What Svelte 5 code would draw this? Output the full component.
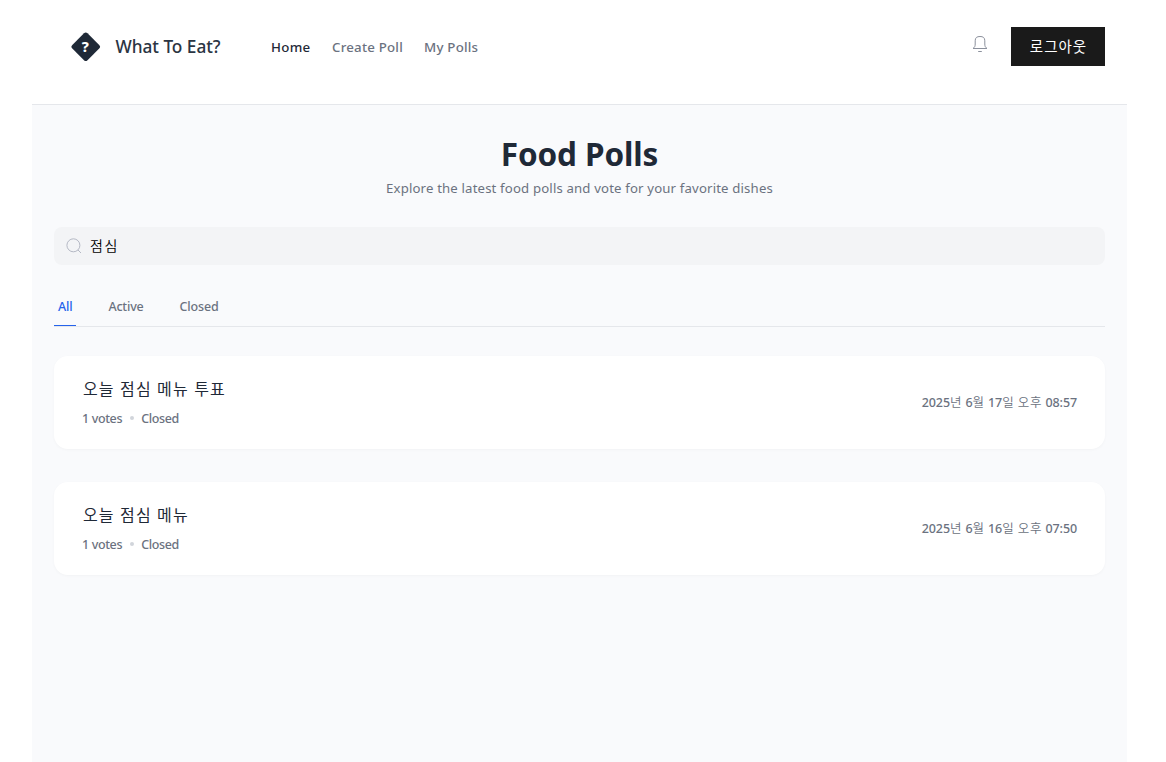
<script lang="ts">
  const links = [
    { label: 'Home', width: 39 },
    { label: 'Create Poll', width: 70 },
    { label: 'My Polls', width: 55 },
  ];
  const tabs = ['All', 'Active', 'Closed'];
  const polls = [
    { title: '오늘 점심 메뉴 투표', votes: 1, status: 'Closed', date: '2025년 6월 17일 오후 08:57' },
    { title: '오늘 점심 메뉴', votes: 1, status: 'Closed', date: '2025년 6월 16일 오후 07:50' },
  ];
  let active = $state('All');
  let page = $state('Home');
  let query = $state('점심');

  // Splits a date into Hangul and non-Hangul runs, which carry different weights.
  const runs = (text: string) => text.split(/([가-힣]+)/).filter(Boolean);
</script>

<div class="app">
  <header>
    <div class="brand">
      <svg width="30" height="30" viewBox="0 0 30 30" aria-hidden="true">
        <rect x="4" y="4" width="21.500" height="21.500" rx="2.500" transform="rotate(45 14.750 14.750)" fill="#1f2937" />
        <text x="14.400" y="20" text-anchor="middle" fill="#fff" font-size="14.500" font-weight="800" font-family="Noto Sans, sans-serif">?</text>
      </svg>
      <span class="name">What To Eat?</span>
    </div>
    <nav>
      {#each links as link}
        <button class="link" class:current={page === link.label} style:width="{link.width}px" onclick={() => (page = link.label)}>{link.label}</button>
      {/each}
    </nav>
    <svg class="bell" width="16" height="18" viewBox="0 0 16 18" fill="none" stroke="#8b909c" aria-hidden="true">
      <path d="M3.200 9V5.800C3.200 2.500 5 1.500 8 1.500s4.800 1 4.800 4.300V9c0 2 .4 3.300 2.200 4.500H1C2.800 12.300 3.200 11 3.200 9Z" stroke-width="1" />
      <path d="M6.200 16.500h3.600" stroke-width="1" />
    </svg>
    <button class="logout">로그아웃</button>
  </header>
  <main>
    <h1>Food Polls</h1>
    <p class="sub">Explore the latest food polls and vote for your favorite dishes</p>
    <label class="search">
      <svg width="16" height="16" viewBox="0 0 16 16" fill="none" stroke="#b4b8c4" aria-hidden="true">
        <circle cx="7.400" cy="7.300" r="6.500" />
        <path d="m12 12 3 3" />
      </svg>
      <input bind:value={query} aria-label="Search" />
    </label>
    <div class="tabs">
      {#each tabs as tab}
        <button class="tab" class:selected={active === tab} onclick={() => (active = tab)}>{tab}</button>
      {/each}
    </div>
    <div class="list">
      {#each polls as poll}
        <article>
          <div>
            <h2>{poll.title}</h2>
            <div class="meta"><span>{poll.votes} votes</span><i></i><span>{poll.status}</span></div>
          </div>
          <time>{#each runs(poll.date) as run}<span class:hangul={/[가-힣]/.test(run)}>{run}</span>{/each}</time>
        </article>
      {/each}
    </div>
  </main>
</div>

<style>
  :global(body) { background: #fff; overflow: hidden; }
  .app {
    width: 1095px;
    height: 762px;
    margin-left: 32px;
    display: flex;
    flex-direction: column;
    font-family: 'Noto Sans', 'Noto Sans CJK KR', sans-serif;
    color: #1f2937;
  }
  button { border: 0; background: none; padding: 0; font: inherit; white-space: nowrap; cursor: pointer; }
  header {
    box-sizing: border-box;
    height: 105px;
    flex: none;
    display: flex;
    align-items: flex-start;
    padding: 27px 22px 0 39px;
    border-bottom: 1px solid #e5e7eb;
  }
  .brand { display: flex; align-items: center; height: 40px; width: 200px; }
  .name { margin-left: 14.500px; padding-bottom: 2px; font-size: 17.300px; letter-spacing: -0.040px; font-weight: 500; color: #2b3543; white-space: nowrap; }
  nav { display: flex; gap: 22px; height: 40px; flex: 1; }
  .link { font-size: 13.300px; letter-spacing: 0.210px; font-weight: 500; color: #6b7280; text-align: left; }
  .current { color: #1f2937; letter-spacing: 0.300px; }
  .bell { margin: 8px 23px 0 0; }
  .logout { width: 94px; height: 39px; padding-bottom: 3px; background: #1a1a1a; color: #fff; font-size: 14.500px; letter-spacing: 1px; text-indent: 1px; }
  main { flex: 1; background: #f9fafc; padding: 26px 22px 0; }
  h1 { margin: 0; height: 45px; line-height: 45px; font-size: 31.500px; letter-spacing: -0.120px; font-weight: 700; text-align: center; }
  .sub { margin: 0; height: 24px; line-height: 24px; font-size: 13.200px; letter-spacing: 0.155px; text-align: center; color: #6b7280; }
  .search {
    box-sizing: border-box;
    display: flex;
    align-items: center;
    height: 38px;
    margin-top: 27px;
    padding: 0 12px;
    border-radius: 8px;
    background: #f3f4f6;
  }
  input { flex: 1; margin-left: 8px; padding: 0 0 2px; border: 0; outline: 0; background: none; font: inherit; font-size: 14px; font-weight: 350; letter-spacing: 1.500px; color: #000; }
  .tabs { box-sizing: border-box; display: flex; gap: 28px; height: 42px; margin-top: 20px; border-bottom: 1px solid #e5e7eb; }
  .tab { height: 41px; padding: 3px 4px 0; font-size: 12.500px; letter-spacing: -0.180px; font-weight: 500; color: #6b7280; border-bottom: 1px solid transparent; box-sizing: border-box; }
  .selected { color: #2563eb; border-bottom-color: #2563eb; }
  .list { display: grid; gap: 33px; margin-top: 29px; }
  article {
    box-sizing: border-box;
    display: flex;
    justify-content: space-between;
    align-items: center;
    height: 93px;
    padding: 0 28px 1px 29px;
    border-radius: 14px;
    background: #fff;
    box-shadow: 0 1px 3px rgba(0, 0, 0, 0.03);
  }
  h2 { margin: 0; height: 32px; line-height: 32px; font-size: 16px; font-weight: 400; letter-spacing: 1.150px; white-space: nowrap; }
  .meta { display: flex; align-items: center; height: 26px; margin-left: -1px; font-size: 12.500px; letter-spacing: -0.360px; font-weight: 500; color: #6b7280; }
  .meta i { width: 4px; height: 4px; border-radius: 50%; background: #d1d5db; margin: 0 7.500px; }
  time { padding-bottom: 2px; font-size: 12.500px; letter-spacing: -0.100px; font-weight: 500; color: #6b7280; white-space: nowrap; }
  .hangul { font-weight: 350; letter-spacing: 0.850px; }
</style>
